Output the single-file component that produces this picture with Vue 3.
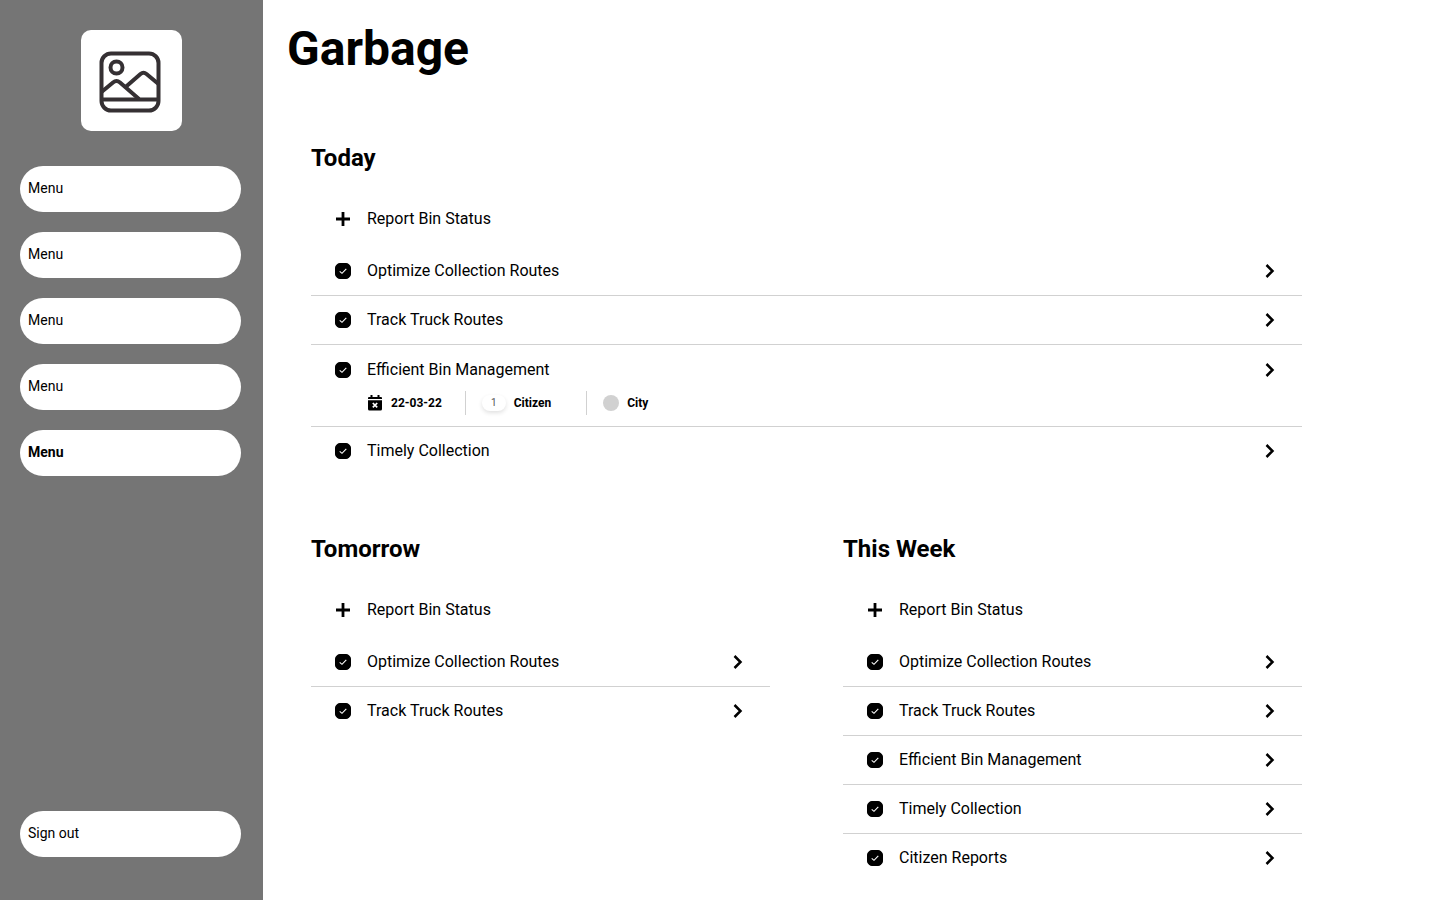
<script setup>
import { reactive } from 'vue'

const menu = reactive([
  { id: 1, label: 'Menu', active: false },
  { id: 2, label: 'Menu', active: false },
  { id: 3, label: 'Menu', active: false },
  { id: 4, label: 'Menu', active: false },
  { id: 5, label: 'Menu', active: true },
])

const task = (label, detail = null) => ({ label, detail, done: true })

const sections = reactive([
  {
    id: 'today',
    title: 'Today',
    wide: true,
    tasks: [
      task('Optimize Collection Routes'),
      task('Track Truck Routes'),
      task('Efficient Bin Management', { date: '22-03-22', count: 1, role: 'Citizen', place: 'City' }),
      task('Timely Collection'),
    ],
  },
  {
    id: 'tomorrow',
    title: 'Tomorrow',
    wide: false,
    tasks: [task('Optimize Collection Routes'), task('Track Truck Routes')],
  },
  {
    id: 'week',
    title: 'This Week',
    wide: false,
    tasks: [
      task('Optimize Collection Routes'),
      task('Track Truck Routes'),
      task('Efficient Bin Management'),
      task('Timely Collection'),
      task('Citizen Reports'),
    ],
  },
])
</script>

<template>
  <div class="page">
    <aside class="sidebar">
      <div class="logo">
        <svg width="66" height="66" viewBox="0 -3 66 66" fill="none" stroke="#353033" stroke-width="4" stroke-linejoin="round">
          <rect x="2.5" y="2.5" width="57" height="57" rx="9.5" />
          <circle cx="17.5" cy="16.5" r="6" />
          <path d="M2.5 48.5H59.5" />
          <path d="M2.5 41L14 31.5Q17.500 28.500 21 31.500L40 48" />
          <path d="M26 36.500L41.500 23Q44.500 20.500 47.500 23L59.500 33" />
        </svg>
      </div>
      <nav class="menu">
        <button v-for="item in menu" :key="item.id" type="button" class="pill" :class="{ active: item.active }">
          {{ item.label }}
        </button>
      </nav>
      <button type="button" class="pill sign-out">Sign out</button>
    </aside>

    <main class="content">
      <h1>Garbage</h1>
      <div class="board">
        <section v-for="s in sections" :key="s.id" :class="{ wide: s.wide }">
          <h2>{{ s.title }}</h2>
          <button type="button" class="report">
            <svg class="icon" width="16" height="16" viewBox="0 0 16 16" fill="none" stroke="#000" stroke-width="2.800">
              <path d="M8 1V15M1 8H15" />
            </svg>
            Report Bin Status
          </button>
          <ul>
            <li v-for="t in s.tasks" :key="t.label" :class="{ detailed: t.detail }">
              <div class="row">
                <label>
                  <span class="check">
                    <input v-model="t.done" type="checkbox" />
                    <svg width="16" height="16" viewBox="0 0 16 16" fill="none" stroke="#fff" stroke-width="1.100">
                      <path d="M4.700 8.300L7 10.300L11.300 5.800" />
                    </svg>
                  </span>
                  {{ t.label }}
                </label>
                <button type="button" class="open" :aria-label="'Open ' + t.label">
                  <svg width="16" height="16" viewBox="0 0 16 16" fill="none" stroke="#000" stroke-width="2.500">
                    <path d="M4.500 2L10.500 8L4.500 14" />
                  </svg>
                </button>
              </div>
              <div v-if="t.detail" class="meta">
                <span class="cell date">
                  <svg width="16" height="16" viewBox="0 0 16 16">
                    <path d="M1 4V3Q1 2 2 2H3.500V0H5.500V2H10.500V0H12.500V2H14Q15 2 15 3V4ZM1 5.200H15V14Q15 15.500 13.500 15.500H2.500Q1 15.500 1 14Z" />
                    <path d="M5.800 8L10.200 12.400M10.200 8L5.800 12.400" stroke="#fff" stroke-width="1.700" />
                  </svg>
                  {{ t.detail.date }}
                </span>
                <span class="cell role"><span class="count">{{ t.detail.count }}</span>{{ t.detail.role }}</span>
                <span class="cell place"><span class="dot"></span>{{ t.detail.place }}</span>
              </div>
            </li>
          </ul>
        </section>
      </div>
    </main>
  </div>
</template>

<style>
body {
  margin: 0;
  background: #fff;
}
</style>

<style scoped>
.page {
  display: flex;
  min-height: 100vh;
  font-family: Roboto, "Liberation Sans", sans-serif;
  color: #000;
}
button {
  border: 0;
  background: none;
  color: inherit;
  font-family: inherit;
  cursor: pointer;
}
svg {
  display: block;
  flex: none;
}
.sidebar {
  box-sizing: border-box;
  flex: none;
  width: 263px;
  padding: 30px 20px 43px;
  display: flex;
  flex-direction: column;
  background: #757575;
}
.logo {
  align-self: center;
  width: 101px;
  height: 101px;
  display: flex;
  align-items: center;
  justify-content: center;
  border-radius: 10px;
  background: #fff;
}
.menu {
  margin-top: 35px;
  display: flex;
  flex-direction: column;
  gap: 20px;
}
.pill {
  height: 46px;
  margin-right: 2px;
  padding: 0 8px 2px;
  border-radius: 23px;
  background: #fff;
  font-size: 14px;
  line-height: 20px;
  text-align: left;
}
.pill.active {
  font-weight: 700;
}
.sign-out {
  margin-top: auto;
}
.content {
  flex: 1;
  padding: 21px 138px 16px 24px;
}
h1 {
  margin: 0;
  font-size: 48px;
  line-height: 56px;
  font-weight: 700;
}
.board {
  margin: 67px 0 0 24px;
  display: grid;
  grid-template-columns: 1fr 1fr;
  gap: 60px 73px;
}
.wide {
  grid-column: 1 / -1;
}
h2 {
  margin: 0;
  font-size: 24px;
  line-height: 29px;
  font-weight: 700;
}
.report {
  margin-top: 22px;
  padding: 0 24px;
  height: 48px;
  display: flex;
  align-items: center;
  gap: 16px;
  font-size: 16px;
  line-height: 24px;
}
ul {
  margin: 4px 0 0;
  padding: 0;
  list-style: none;
}
li {
  padding: 12px 24px;
}
li + li {
  border-top: 1px solid #d1d1d1;
}
li.detailed {
  padding: 13px 24px 11px;
}
.row,
.row label {
  display: flex;
  align-items: center;
  gap: 16px;
  font-size: 16px;
  line-height: 24px;
}
.row {
  justify-content: space-between;
}
.check {
  display: grid;
}
.check > * {
  grid-area: 1 / 1;
}
.check input {
  appearance: none;
  width: 16px;
  height: 16px;
  margin: 0;
  border: 1px solid #000;
  border-radius: 5px;
}
.check input:checked {
  background: #000;
}
.check svg {
  z-index: 1;
  pointer-events: none;
}
.open {
  padding: 0;
}
.meta {
  margin: 9px 0 0 32px;
  display: flex;
  font-size: 12px;
  line-height: 16px;
  font-weight: 700;
}
.cell {
  height: 24px;
  display: flex;
  align-items: center;
  gap: 8px;
}
.cell + .cell {
  margin-left: 23px;
  padding-left: 16px;
  border-left: 1px solid #d1d1d1;
}
.cell.role {
  padding-right: 12px;
}
.count {
  width: 24px;
  border-radius: 8px;
  box-shadow: 0 2px 4px rgba(0, 0, 0, 0.12);
  color: #555;
  font-size: 10px;
  font-weight: 400;
  text-align: center;
}
.dot {
  width: 16px;
  height: 16px;
  border-radius: 50%;
  background: #d1d1d1;
}
</style>
